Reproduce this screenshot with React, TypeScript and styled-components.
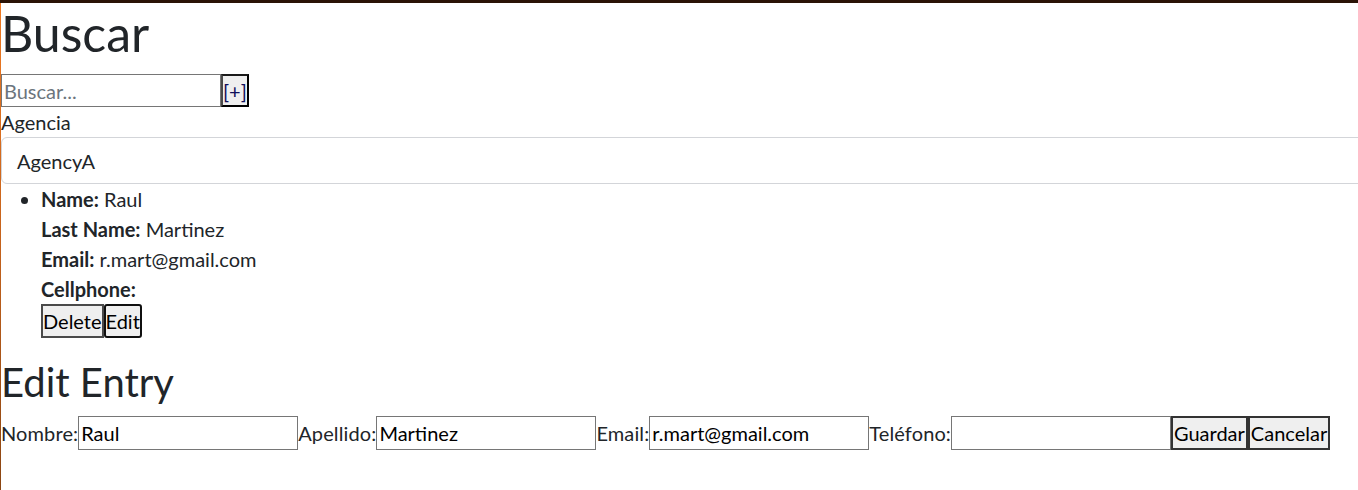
import React from "react";
import styled, { createGlobalStyle } from "styled-components";

const Global = createGlobalStyle`
  html { font-size: 20px; overflow: hidden; }
  body {
    margin: 0;
    font-family: Lato, "Noto Sans", sans-serif;
    font-size: 1rem;
    line-height: 1.5;
    color: #212529;
    background: #fff;
  }
  *, *::before, *::after { box-sizing: border-box; }
`;

const Page = styled.div`
  min-height: 100vh;
  padding: 3px 0 0 1px;
  background:
    linear-gradient(#2a1306, #2a1306) top left / 100% 3px no-repeat,
    linear-gradient(to bottom, #f07a22, #c4621c 50%, #8a4512) left top / 1px 100% no-repeat,
    #fff;
`;

const Title = styled.h1`
  margin: 0 0 11px;
  font-size: 2.5rem;
  font-weight: 400;
  line-height: 1.2;
  color: #212529;
`;

const SubTitle = styled.h2`
  margin: 0 0 10px;
  font-size: 2rem;
  font-weight: 400;
  line-height: 1.2;
  color: #212529;
`;

const SearchRow = styled.div`
  display: flex;
  align-items: stretch;
  height: 33px;
`;

const TextInput = styled.input<{ $h?: number }>`
  width: 220px;
  height: ${(p) => p.$h ?? 34}px;
  margin: 0;
  padding: 1px 2px;
  border: 1px solid #767676;
  font-family: Lato, "Noto Sans", sans-serif;
  font-size: 1rem;
  color: #000;
  background: #fff;
  &::placeholder { color: #6c757d; }
  outline: none;
`;

const Btn = styled.button<{ $focused?: boolean }>`
  margin: 0;
  padding: 0;
  font-family: Lato, "Noto Sans", sans-serif;
  font-size: 1rem;
  line-height: 1.5;
  color: #000;
  background: #efefef;
  border: 2px solid ${(p) => (p.$focused ? "#101010" : "#4a4a4a")};
  border-radius: ${(p) => (p.$focused ? "3px" : "0")};
  cursor: pointer;
`;

const PlusBtn = styled(Btn)`
  color: #10105a;
  border-color: #1a1a1a #000 #000 #4a4a4a;
  padding: 0;
`;

const Label = styled.label`
  display: block;
`;

const SelectBox = styled.div`
  width: calc(100% + 20px);
  padding: 7.5px 45px 7.5px 15px;
  border: 1px solid #d3d5d9;
  border-radius: 6px;
  line-height: 1.5;
  color: #212529;
`;

const List = styled.ul`
  margin: 0 0 20px;
  padding-left: 40px;
`;

const Field = styled.div``;

const Bold = styled.b`
  font-weight: 700;
`;

const Actions = styled.div`
  display: flex;
`;

const FormRow = styled.form`
  display: flex;
  align-items: center;
  height: 34px;
`;

const FormLabel = styled.label`
  white-space: nowrap;
  letter-spacing: 0.12px;
`;

const FormBtn = styled(Btn)`
  height: 34px;
  padding: 0 1px;
  border-color: #333;
`;

export default function App() {
  return (
    <Page>
      <Global />
      <Title>Buscar</Title>
      <SearchRow>
        <TextInput $h={33} placeholder="Buscar..." />
        <PlusBtn>[+]</PlusBtn>
      </SearchRow>
      <Label>Agencia</Label>
      <SelectBox>AgencyA</SelectBox>
      <List>
        <li>
          <Field>
            <Bold>Name:</Bold> Raul
          </Field>
          <Field>
            <Bold>Last Name:</Bold> Martinez
          </Field>
          <Field>
            <Bold>Email:</Bold> r.mart@gmail.com
          </Field>
          <Field>
            <Bold>Cellphone:</Bold>
          </Field>
          <Actions>
            <Btn>Delete</Btn>
            <Btn $focused>Edit</Btn>
          </Actions>
        </li>
      </List>
      <SubTitle>Edit Entry</SubTitle>
      <FormRow onSubmit={(e) => e.preventDefault()}>
        <FormLabel>Nombre:</FormLabel>
        <TextInput defaultValue="Raul" />
        <FormLabel>Apellido:</FormLabel>
        <TextInput defaultValue="Martinez" />
        <FormLabel>Email:</FormLabel>
        <TextInput defaultValue="r.mart@gmail.com" />
        <FormLabel>Teléfono:</FormLabel>
        <TextInput defaultValue="" />
        <FormBtn type="submit">Guardar</FormBtn>
        <FormBtn type="button">Cancelar</FormBtn>
      </FormRow>
    </Page>
  );
}
